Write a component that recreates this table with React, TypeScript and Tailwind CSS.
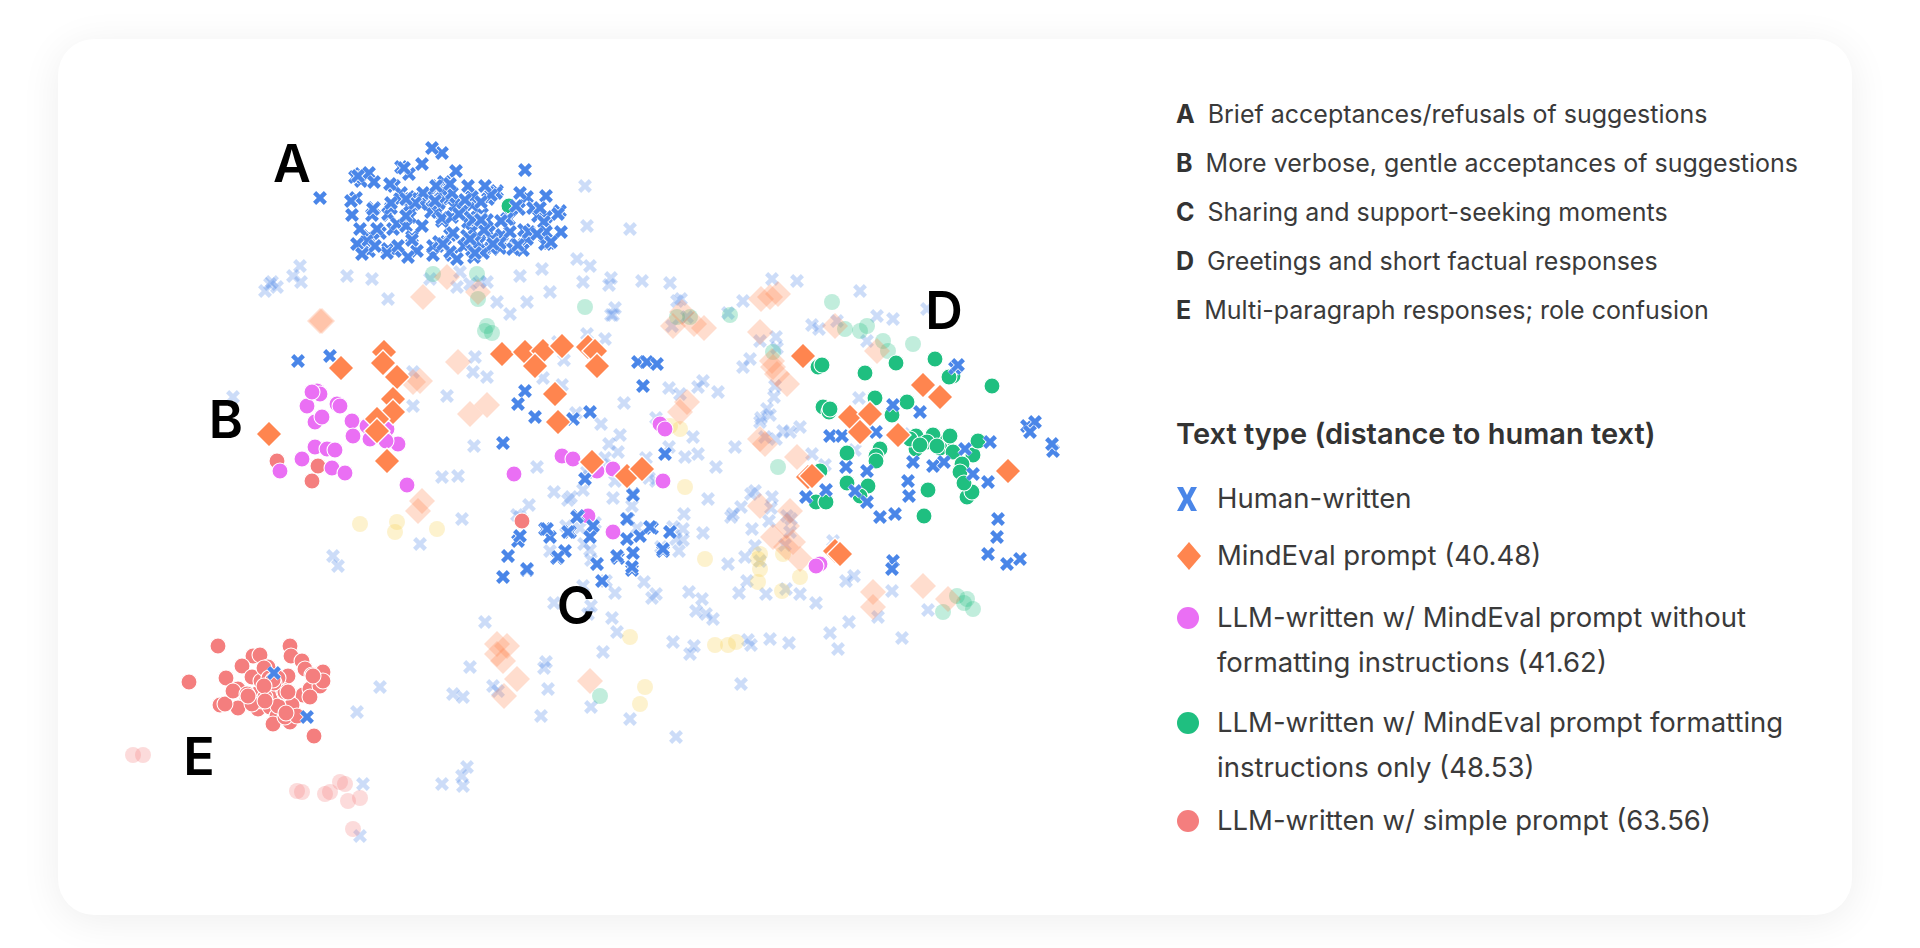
import React from "react";

type Kind = "x" | "d" | "c";
type Pt = [number, number];

const BLUE = "#4a86e8";
const ORANGE = "#ff854f";
const PINK = "#ea6ff4";
const GREEN = "#1fbf80";
const RED = "#f47e7e";
const YELLOW = "#f7cf4f";

function rng(seed: number) {
  return () => {
    seed = (seed + 0x6d2b79f5) | 0;
    let t = Math.imul(seed ^ (seed >>> 15), 1 | seed);
    t = (t + Math.imul(t ^ (t >>> 7), 61 | t)) ^ t;
    return ((t ^ (t >>> 14)) >>> 0) / 4294967296;
  };
}

function blob(seed: number, n: number, cx: number, cy: number, sx: number, sy: number, box?: [number, number, number, number]): Pt[] {
  const r = rng(seed);
  const out: Pt[] = [];
  while (out.length < n) {
    const u = Math.max(r(), 1e-6);
    const v = r();
    const m = Math.sqrt(-2 * Math.log(u));
    const x = cx + m * Math.cos(2 * Math.PI * v) * sx;
    const y = cy + m * Math.sin(2 * Math.PI * v) * sy;
    if (box && (x < box[0] || x > box[2] || y < box[1] || y > box[3])) continue;
    out.push([Math.round(x), Math.round(y)]);
  }
  return out;
}

function uniform(seed: number, n: number, x0: number, y0: number, x1: number, y1: number): Pt[] {
  const r = rng(seed);
  return Array.from({ length: n }, () => [Math.round(x0 + r() * (x1 - x0)), Math.round(y0 + r() * (y1 - y0))] as Pt);
}

const pts = (s: string): Pt[] =>
  s.trim().split(/\s+/).map(p => p.split(",").map(Number) as Pt);

// faded background layer
const fadedBlue: Pt[] = [
  ...pts(`585,187 587,227 630,230 577,260 300,267 293,277 272,283 277,288 347,277 372,280 388,300 430,280 460,273 470,285 480,283 457,288 497,303 510,315 527,303 550,293 542,270 583,283 520,277 487,283
  233,398 413,373 447,397 473,373 487,378 475,358 413,407 462,520 420,545 333,557 338,567 680,395 693,438
  860,292 877,317 893,320 837,322 867,342 750,360 743,368 775,387 760,423 765,438 783,432 790,433 800,428 755,492 772,498 752,530 755,547 892,592 797,282 772,280
  380,688 357,713 363,785 360,837 470,668 453,695 463,698 493,687 498,692 467,768 462,777 463,787 442,785 485,623 270,285 265,292 301,283
  541,717 548,690 603,653 690,655 696,612 713,620 748,641 770,640 591,708 630,720 702,600 676,738`),
  ...blob(11, 125, 690, 520, 105, 100, [440, 290, 1000, 700]),
  ...blob(13, 14, 640, 300, 40, 20),
];
const fadedOrange: Pt[] = pts(`320,322 458,363 470,415 487,406 413,383 420,382 422,502 418,512 673,327 687,403 680,413 322,322 447,278 423,298 478,293
  770,298 778,295 760,333 772,362 777,375 787,385 835,327 877,352 797,458 790,512 760,507 787,527 773,538 793,543 873,593 873,608 923,587 948,600
  497,655 507,647 682,313 694,325 704,329 761,300 773,368 497,645 503,662 517,680 590,682 504,697 760,440 765,445 800,560 786,548`);
const fadedGreen: Pt[] = pts(`433,275 477,275 478,300 585,308 487,327 485,332
  832,303 867,327 860,332 883,342 888,352 913,345 845,330 773,353 778,468 967,600 973,610 943,613 957,597 964,604
  677,318 600,697 492,334 690,318 730,316`);
const fadedYellow: Pt[] = pts(`360,525 397,523 395,533 437,530 685,488 680,430 670,427
  783,555 758,560 760,570 800,578 782,592 758,583 630,638 645,688 640,705 736,643 728,646 715,646 760,555 705,560`);
const fadedRed: Pt[] = pts(`133,756 143,756 297,792 302,793 325,795 330,793 340,783 345,785 348,802 360,799 353,830`);

// bold layer
const boldBlue: Pt[] = [
  ...uniform(21, 130, 348, 188, 566, 264).map(([x, y]) => [x, Math.round(228 + (y - 228) * (1 - Math.abs(x - 455) / 420))] as Pt),
  ...blob(22, 24, 420, 182, 32, 12),
  ...pts(`432,149 525,171 485,187 404,169 422,165 358,177 374,183
  298,362 330,357 525,392 518,405 535,418 590,413 503,444 643,387 638,363 647,363 657,365 665,455 585,480 633,495 573,420
  633,496 578,517 593,527 628,520 652,529 670,533 545,530 570,533 590,538 627,540 640,537 518,542 550,538 663,552 633,554 618,559 565,552 557,559 597,565 632,571 508,557 527,571 503,578 602,582
  577,518 547,530 568,533 520,537 508,557 527,570 558,558 597,565 627,520 650,528 670,533 663,550 632,568 617,557
  955,369 893,406 920,413 876,433 830,437 842,437 990,443 965,450 913,463 933,467 944,463 846,468 867,472 973,475 988,483 908,482 909,497 855,492 867,503 826,491 806,498 880,518 895,515
  1027,427 1035,423 1053,452 1052,445 998,520 997,538 988,555 1007,565 1020,560 893,562 892,570 958,366 1030,433
  274,674 307,718`),
];
const greenPts: Pt[] = pts(`818,368 865,374 896,364 935,360 992,387 953,377 875,399 907,403 892,416 823,408 829,413 847,454 880,450 876,457 916,437 933,436 947,442 916,450 927,443 940,449 953,453 973,456 978,442 962,465 820,472 847,484 868,487 928,491 960,473 967,498 972,493 860,497 816,503 826,503 924,517 949,378
  509,207 910,440 937,447 950,437 920,446 876,462 964,484 822,366 830,410`);
const pinkPts: Pt[] = pts(`317,392 320,395 307,407 337,405 340,407 315,423 352,422 353,437 315,448 327,450 335,451 302,460 332,469 345,474 280,472 367,427 377,433 387,430 398,445 383,438 407,486 312,393 322,418 370,440 386,442
  514,475 562,457 573,460 597,472 613,470 663,482 660,425 665,430 588,517 613,533 820,565 816,567`);
const redPts: Pt[] = [
  ...pts(`218,647 189,683 314,737 253,657 260,656 290,647 291,657 302,662 305,670 323,673 312,676 242,667 226,679 252,678 238,690 263,682 268,668 288,677 283,691 303,696 310,690 320,687 323,682 247,699 270,698 258,710 238,709 220,706 225,705 270,708 277,717 292,706 290,723 273,725 257,695 233,692 310,698 285,718 247,695 262,702 278,707 297,717
  277,462 318,467 312,482 522,522`),
  ...blob(31, 16, 268, 690, 22, 14, [225, 660, 320, 720]),
];
const diamonds: Pt[] = pts(`269,435 341,369 384,353 383,364 397,378 393,400 393,413 377,420 377,432 387,462
  502,355 525,353 543,352 562,347 588,348 595,352 597,367 535,367 555,395 558,423 592,463 627,477 642,470
  803,357 923,386 940,398 850,418 870,415 860,433 898,436 808,478 812,477 1008,472 835,552 840,555`);

function Mark({ k, x, y, c, faded }: { k: Kind; x: number; y: number; c: string; faded?: boolean }) {
  if (k === "x") {
    const s = 5.4;
    const d = `M${x - s},${y - s}L${x + s},${y + s}M${x - s},${y + s}L${x + s},${y - s}`;
    return (
      <g>
        {!faded && <path d={d} stroke="#fff" strokeWidth={6} />}
        <path d={d} stroke={c} strokeWidth={4.4} />
      </g>
    );
  }
  if (k === "d") {
    const s = 13;
    return (
      <polygon
        points={`${x},${y - s} ${x + s},${y} ${x},${y + s} ${x - s},${y}`}
        fill={c}
        stroke={faded ? "none" : "#fff"}
        strokeWidth={1.4}
      />
    );
  }
  return <circle cx={x} cy={y} r={8} fill={c} stroke={faded ? "none" : "#fff"} strokeWidth={1.1} />;
}

function Layer({ list, k, c, faded }: { list: Pt[]; k: Kind; c: string; faded?: boolean }) {
  return (
    <g>
      {list.map(([x, y], i) => (
        <g key={i} opacity={faded ? 0.28 : 1}>
          <Mark k={k} x={x} y={y} c={c} faded={faded} />
        </g>
      ))}
    </g>
  );
}

function Plot() {
  const letters: [string, number, number][] = [
    ["A", 292, 183],
    ["B", 226, 439],
    ["C", 576, 625],
    ["D", 944, 330],
    ["E", 199, 776],
  ];
  return (
    <svg width={1097} height={876} viewBox="58 40 1097 876" className="shrink-0">
      <Layer list={fadedBlue} k="x" c={BLUE} faded />
      <Layer list={fadedYellow} k="c" c={YELLOW} faded />
      <Layer list={fadedGreen} k="c" c={GREEN} faded />
      <Layer list={fadedRed} k="c" c={RED} faded />
      <Layer list={fadedOrange} k="d" c={ORANGE} faded />
      <Layer list={redPts} k="c" c={RED} />
      <Layer list={greenPts} k="c" c={GREEN} />
      <Layer list={pinkPts} k="c" c={PINK} />
      <Layer list={boldBlue} k="x" c={BLUE} />
      <Layer list={diamonds} k="d" c={ORANGE} />
      {letters.map(([t, x, y]) => (
        <text
          key={t}
          x={x}
          y={y}
          textAnchor="middle"
          fontSize={52}
          fontWeight={600}
          fill="#000"
          style={{ fontFamily: "Inter, 'Liberation Sans', sans-serif" }}
        >
          {t}
        </text>
      ))}
    </svg>
  );
}

function XIcon() {
  return (
    <svg width="22" height="26" viewBox="0 0 22 26">
      <path d="M1,1 L7,1 L11,9 L15,1 L21,1 L14.5,13 L21,25 L15,25 L11,17 L7,25 L1,25 L7.5,13 Z" fill={BLUE} />
    </svg>
  );
}

function DiamondIcon() {
  return (
    <svg width="26" height="30" viewBox="0 0 26 30">
      <polygon points="13,1 25,15 13,29 1,15" fill={ORANGE} />
    </svg>
  );
}

function Dot({ color }: { color: string }) {
  return (
    <svg width="24" height="24" viewBox="0 0 24 24">
      <circle cx="12" cy="12" r="11" fill={color} />
    </svg>
  );
}

const clusters: [string, string][] = [
  ["A", "Brief acceptances/refusals of suggestions"],
  ["B", "More verbose, gentle acceptances of suggestions"],
  ["C", "Sharing and support-seeking moments"],
  ["D", "Greetings and short factual responses"],
  ["E", "Multi-paragraph responses; role confusion"],
];

function LegendItem({ icon, lines, className }: { icon: React.ReactNode; lines: string[]; className: string }) {
  return (
    <div className={`flex items-start ${className}`}>
      <div className="flex h-[45px] w-[41px] shrink-0 items-center">{icon}</div>
      <div className="text-[27.5px] leading-[45px] text-[#3a3a3a]">
        {lines.map(l => (
          <div key={l} className="whitespace-nowrap">{l}</div>
        ))}
      </div>
    </div>
  );
}

export default function App() {
  return (
    <div className="h-[948px] w-full bg-white pl-[58px] pr-[68px] pt-[39px]" style={{ fontFamily: "Inter, 'Noto Sans', sans-serif" }}>
      <div className="flex h-[876px] w-full overflow-hidden rounded-[36px] bg-white shadow-[0_6px_40px_rgba(0,0,0,0.07)]">
        <Plot />
        <div className="flex flex-col pl-[21px] pt-[51px]">
          {clusters.map(([k, t]) => (
            <div key={k} className="whitespace-nowrap text-[25px] leading-[49px] text-[#3a3a3a]">
              <span className="mr-[13px] font-bold text-[#333]">{k}</span>
              {t}
            </div>
          ))}
          <div className="mt-[79px] whitespace-nowrap text-[29px] font-semibold leading-[40px] text-[#333]">
            Text type (distance to human text)
          </div>
          <LegendItem className="mt-[22px]" icon={<XIcon />} lines={["Human-written"]} />
          <LegendItem className="mt-[12px]" icon={<DiamondIcon />} lines={["MindEval prompt (40.48)"]} />
          <LegendItem
            className="mt-[17px]"
            icon={<Dot color={PINK} />}
            lines={["LLM-written w/ MindEval prompt without", "formatting instructions (41.62)"]}
          />
          <LegendItem
            className="mt-[15px]"
            icon={<Dot color={GREEN} />}
            lines={["LLM-written w/ MindEval prompt formatting", "instructions only (48.53)"]}
          />
          <LegendItem className="mt-[8px]" icon={<Dot color={RED} />} lines={["LLM-written w/ simple prompt (63.56)"]} />
        </div>
      </div>
    </div>
  );
}
